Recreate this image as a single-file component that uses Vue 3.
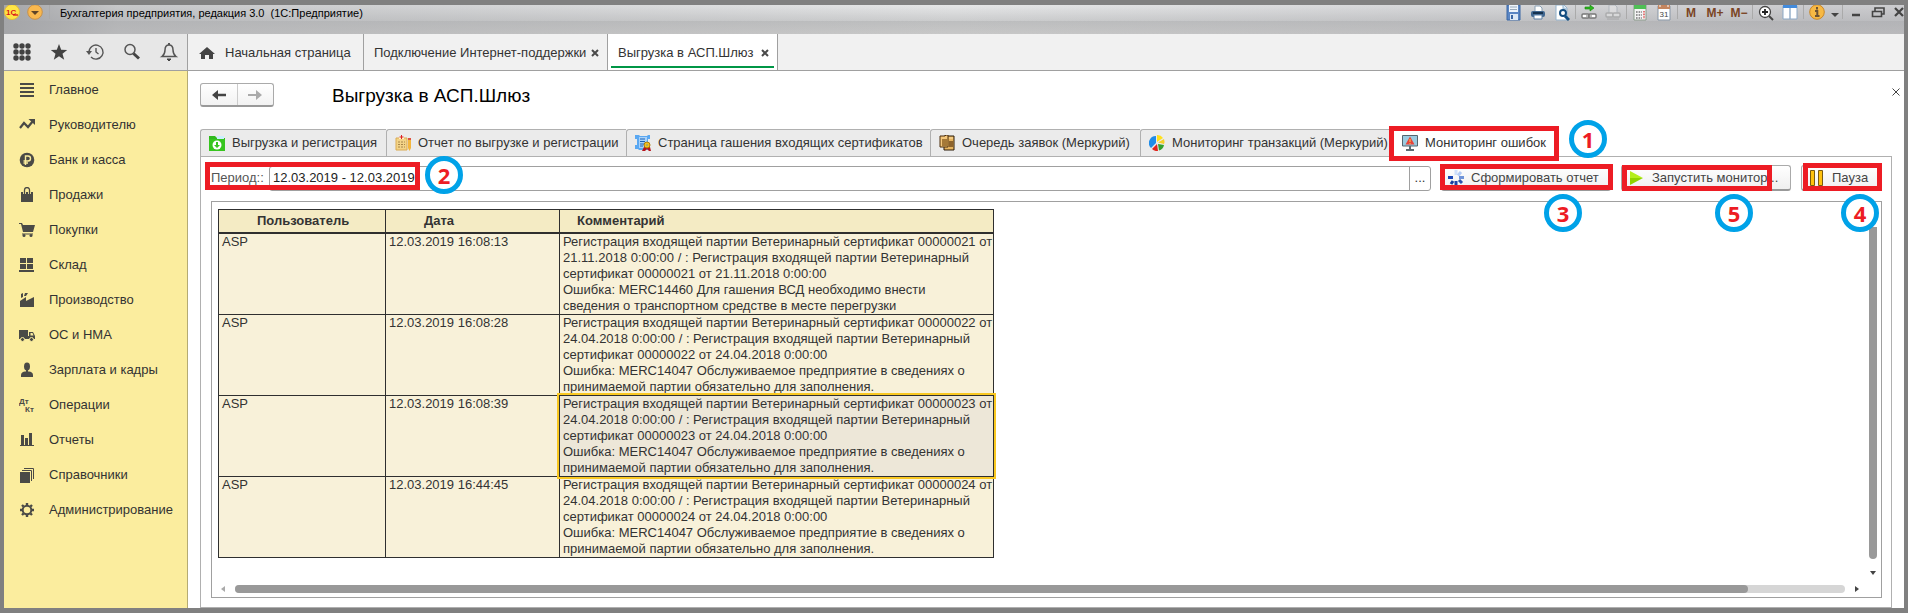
<script setup>
import { ref } from 'vue'

const period = ref('12.03.2019 - 12.03.2019')

const titleIcons = [
  { label: 'Сохранить', svg: '<path d="M1 0h13v15H1z" fill="#5b86c4" stroke="#3b66a4"/><path d="M3 0h9v7H3z" fill="#eef4fb"/><path d="M4 2h7M4 4.500h7" stroke="#9ab"/><path d="M4 9h8v6H4z" fill="#dce8f6"/><path d="M5 10h2v4H5z" fill="#3b66a4"/>' },
  { label: 'Печать', svg: '<path d="M5 6V1h5l2 2v3" fill="#fff" stroke="#8aa0b4"/><rect x="1" y="6" width="14" height="6" rx="2" fill="#3f6690"/><path d="M3 8h10" stroke="#16324f" stroke-width="2"/><path d="M4 10h8v4H4z" fill="#fff" stroke="#5c7ea3"/>' },
  { label: 'Просмотр', svg: '<path d="M2 0h8l3 3v12H2z" fill="#fff" stroke="#93b2cc"/><path d="M9 0v4h4" fill="#cfe0ef" stroke="#93b2cc"/><circle cx="9" cy="8" r="3" fill="#fff" stroke="#134d80" stroke-width="2"/><path d="M11 11l4 4" stroke="#134d80" stroke-width="3"/>' },
  { sep: true },
  { label: 'Ссылка', svg: '<path d="M4 2h5V0l4 3-4 3V4H4z" fill="#2dbb1e" stroke="#15820c" stroke-width=".6"/><rect x="1" y="9" width="7" height="4" rx="1" fill="#fff" stroke="#777" stroke-width="1.4"/><rect x="8" y="9" width="7" height="4" rx="1" fill="#fff" stroke="#777" stroke-width="1.4"/><path d="M5 11h6" stroke="#777"/>' },
  { label: 'Перейти по ссылке', svg: '<g opacity=".45"><path d="M4 9V0h6l2 2v7" fill="#eee" stroke="#8d9aa6"/><rect x="1" y="8" width="7" height="4" rx="1" fill="#eee" stroke="#888" stroke-width="1.4"/><rect x="8" y="8" width="7" height="4" rx="1" fill="#eee" stroke="#888" stroke-width="1.4"/><path d="M2 14h12" stroke="#888"/></g>' },
  { sep: true },
  { label: 'Калькулятор', svg: '<path d="M2 0h12v15H2z" fill="#f5f5f5" stroke="#8a9a8a"/><path d="M2 0h12v4H2z" fill="#4fbf55"/><path d="M4 7h6M4 10h6M4 13h6" stroke="#777" stroke-width="1.6" stroke-dasharray="1.6 1"/><path d="M12 6v8" stroke="#e05a5a" stroke-width="1.6" stroke-dasharray="1.6 1"/>' },
  { label: 'Календарь', svg: '<path d="M2 1h12v14H2z" fill="#fff" stroke="#8795a5"/><path d="M2 0h12v4H2z" fill="#c4855e"/><path d="M4 0v2M12 0v2" stroke="#fff"/><text x="8" y="12" text-anchor="middle" font-size="8" fill="#444">31</text>' },
  { sep: true },
  { label: 'M', text: 'M' },
  { label: 'M+', text: 'M+' },
  { label: 'M-', text: 'M−' },
  { sep: true },
  { label: 'Масштаб', svg: '<circle cx="7" cy="7" r="5.5" fill="#fff" stroke="#444" stroke-width="1.3"/><path d="M4 7h6M7 4v6" stroke="#222" stroke-width="1.8"/><path d="M11 11l4 4" stroke="#444" stroke-width="2"/>' },
  { label: 'Панели', svg: '<path d="M1 1h14v13H1z" fill="#fff" stroke="#8da9c6"/><path d="M1 0h14v3H1z" fill="#438bdc"/><path d="M8 3v11" stroke="#8da9c6" stroke-width="1.4"/>' },
  { sep: true },
  { label: 'О программе', svg: '<circle cx="8" cy="7" r="7.3" fill="#f7b944" stroke="#c8872a"/><path d="M8 2v2.500M6 6h2.300v5M6 11h4.500" stroke="#6d5334" stroke-width="2" fill="none"/>' },
  { label: 'Ещё', kind: 'caret', svg: '<path d="M4 8h8l-4 4z" fill="#444"/>' },
  { sep: true },
  { label: 'Свернуть', svg: '<path d="M4 10h8" stroke="#444" stroke-width="2.500"/>' },
  { label: 'Восстановить', kind: 'restore', svg: '<path d="M5 6V3h9v6h-2" fill="none" stroke="#444" stroke-width="1.600"/><path d="M2.500 6.500h9v5h-9z" fill="none" stroke="#444" stroke-width="1.600"/>' },
  { label: 'Закрыть', kind: 'close', svg: '<path d="M7 3l8 8M15 3l-8 8" stroke="#444" stroke-width="2.200"/>' },
]

const quickTools = [
  { label: 'Меню', svg: '<g fill="#424242"><circle cx="4" cy="3" r="2.700"/><circle cx="10" cy="3" r="2.700"/><circle cx="16" cy="3" r="2.700"/><circle cx="4" cy="9" r="2.700"/><circle cx="10" cy="9" r="2.700"/><circle cx="16" cy="9" r="2.700"/><circle cx="4" cy="15" r="2.700"/><circle cx="10" cy="15" r="2.700"/><circle cx="16" cy="15" r="2.700"/></g>' },
  { label: 'Избранное', svg: '<path d="M10 1l2.200 5.700 6 .2-4.700 3.800 1.700 6-5.200-3.500L4.800 16.700l1.700-6L1.800 6.900l6-.2z" fill="#424242"/>' },
  { label: 'История', svg: '<path d="M4 9a7 7 0 1 1 2 5" fill="none" stroke="#555" stroke-width="1.400"/><path d="M1 8h6l-3 4z" fill="#555"/><path d="M11 5v4l2.500 2" fill="none" stroke="#555" stroke-width="1.400"/>' },
  { label: 'Поиск', svg: '<circle cx="8" cy="6.500" r="5" fill="none" stroke="#555" stroke-width="1.500"/><path d="M11.500 10.500l5.500 5" stroke="#444" stroke-width="3"/>' },
  { label: 'Уведомления', svg: '<path d="M3 13.500c2-1.500 3-3 3-6.500 0-3 1.500-5 4-5s4 2 4 5c0 3.500 1 5 3 6.500z" fill="none" stroke="#555" stroke-width="1.500"/><path d="M8 16h4l-2 2z" fill="#444" stroke="#444"/><path d="M10 0v2" stroke="#555" stroke-width="2"/>' },
]

const sections = [
  { name: 'Главное', svg: '<path d="M1 2h14M1 6h14M1 10h14M1 14h14" stroke-width="2" stroke="#4a4a46"/>' },
  { name: 'Руководителю', svg: '<path d="M1 11l4-5 4 4 5-6" fill="none" stroke="#4a4a46" stroke-width="2.200"/><path d="M9.500 2H16v6z"/>' },
  { name: 'Банк и касса', svg: '<circle cx="8" cy="8" r="7.300"/><path d="M6.500 13V4h2.500a2.300 2.300 0 0 1 0 5H4.500M4.500 11H9" fill="none" stroke="#fbed9e" stroke-width="1.400"/>' },
  { name: 'Продажи', svg: '<path d="M2 5h12v10H2z"/><path d="M5.500 7V3a2.500 2.500 0 0 1 5 0v4" fill="none" stroke="#fbed9e" stroke-width="3"/><path d="M5.500 7V3a2.500 2.500 0 0 1 5 0v4" fill="none" stroke="#4a4a46" stroke-width="1.300"/>' },
  { name: 'Покупки', svg: '<path d="M0 1h3l1 2h12l-2 7H4L2 2H0z"/><path d="M3 12h11" stroke="#4a4a46"/><circle cx="5" cy="13.500" r="1.500"/><circle cx="12" cy="13.500" r="1.500"/>' },
  { name: 'Склад', svg: '<path d="M1 1h6v5H1zM8 1h6v5H8zM1 7h6v5H1zM8 7h6v5H8zM0 13h15v2H0z"/>' },
  { name: 'Производство', svg: '<path d="M1 15V9l6-4v4l8-4v10zM2 2l2-1v4L2 6zM6 1h3L7 4H5z"/>' },
  { name: 'ОС и НМА', svg: '<path d="M0 3h9v9H0zM10 5h4l2 4v3h-6z"/><path d="M9 9h2v3H9z"/><path d="M11.500 6h2l1 2.500h-3z" fill="#fbed9e"/><circle cx="3.500" cy="12.500" r="2" stroke="#fbed9e"/><circle cx="12.500" cy="12.500" r="2" stroke="#fbed9e"/>' },
  { name: 'Зарплата и кадры', svg: '<ellipse cx="8" cy="4.500" rx="3" ry="4"/><path d="M7 7h2v4H7z"/><path d="M2 15v-2c0-2 2-3.500 4-3.500h4c2 0 4 1.500 4 3.500v2z"/>' },
  { name: 'Операции', svg: '<g font-size="8" font-weight="700"><text x="0" y="7">Дт</text><text x="6" y="15">Кт</text></g>' },
  { name: 'Отчеты', svg: '<path d="M2 3h3v10H2zM6 6h3v7H6zM10 1h3v12h-3zM1 13h14v1H1z"/>' },
  { name: 'Справочники', svg: '<path d="M1 5h10v11H1z"/><path d="M3 3.500h9.500V14M5 1.500h9.500V12" fill="none" stroke="#4a4a46"/>' },
  { name: 'Администрирование', svg: '<circle cx="8" cy="8" r="4.300" fill="none" stroke="#4a4a46" stroke-width="2"/><g stroke="#4a4a46" stroke-width="2.400"><path d="M8 1v2M8 13v2M1 8h2M13 8h2M3 3l1.500 1.500M11.500 11.500L13 13M3 13l1.500-1.500M11.500 4.500L13 3"/></g>' },
]

const pages = [
  { key: 'tab-upload', name: 'Выгрузка и регистрация', svg: '<path d="M0 1h6l2 2h8v13H0z" fill="#2fb91d"/><path d="M8 1h7v3H8z" fill="#ccefff"/><path d="M0 4h16v12H0z" fill="#37c51f"/><circle cx="8" cy="10" r="4.500" fill="#fff"/><path d="M7 7h2v3h2l-3 3-3-3h2z" fill="#37c51f"/>' },
  { key: 'tab-report', name: 'Отчет по выгрузке и регистрации', svg: '<path d="M1 3h11v12H1z" fill="#f3d488" stroke="#dbab53"/><path d="M4 2h5v2H4z" fill="#fff3c9"/><path d="M6.500 0v4M4.500 2h4" stroke="#d22"/><path d="M3 7h7M3 9.500h7M3 12h7" stroke="#a8864a" stroke-dasharray="2 1"/><path d="M13 3h3v10l-1.500 3L13 13z" fill="#f4b63c"/><path d="M13 3h3v2h-3z" fill="#e0523e"/>' },
  { key: 'tab-cert', name: 'Страница гашения входящих сертификатов', svg: '<path d="M0 0h4l1 1h7l1-1h2v4h-2v11H4l-1-1H0v-4h2V4H0z" fill="#5aa8f2"/><path d="M4 2h8v11H4z" fill="#a8d2fb"/><path d="M5 4h5M5 6.500h5M5 9h4M5 11h3" stroke="#1c63b5"/><path d="M9 12l-2 4h3l2-2 2 2h2l-1-4z" fill="#b7131c"/><circle cx="12" cy="10" r="3" fill="#f5bf1e" stroke="#a97c0c"/><circle cx="12" cy="10" r="1" fill="#9a7"/>' },
  { key: 'tab-queue', name: 'Очередь заявок (Меркурий)', svg: '<path d="M5 1h10v14H5z" fill="#e7b45f" stroke="#2b1b08"/><path d="M1 1h5l1-1h2v12H1z" fill="#f4c77b" stroke="#4a2c0d"/><path d="M3 4h6v7H3z" fill="#a57938"/><path d="M10 6h4v6h-4z" fill="#8d632c"/><path d="M10 3h4" stroke="#ffe1a6"/>' },
  { key: 'tab-trans', name: 'Мониторинг транзакций (Меркурий)', svg: '<path d="M7 8V1a7 7 0 0 0-5 12z" fill="#1f8ce8"/><path d="M8 7V0a7 7 0 0 1 6 3z" fill="#ffe11c"/><path d="M9 7.500L15 4a7 7 0 0 1 0 5z" fill="#f6cf28"/><path d="M8 9L3 14a7 7 0 0 0 6 2z" fill="#e0231c"/><path d="M9 9l6 1a7 7 0 0 1-5 5.500z" fill="#35a12e"/>' },
  { key: 'tab-errors', name: 'Мониторинг ошибок', active: true, svg: '<path d="M.5 .5h15v10.500H.5z" fill="#9bcbe0" stroke="#54656f"/><path d="M8 1.500l4.500 8h-9z" fill="#e8433a"/><path d="M8 4v3M8 8v1" stroke="#fbd34c"/><path d="M7 11h2v3H7zM4 14h8v2H4z" fill="#5c6b73"/>' },
]

const rows = [
  { user: 'ASP', date: '12.03.2019 16:08:13', text: 'Регистрация входящей партии Ветеринарный сертификат 00000021 от\n21.11.2018 0:00:00 / : Регистрация входящей партии Ветеринарный\nсертификат 00000021 от 21.11.2018 0:00:00\nОшибка: MERC14460 Для гашения ВСД необходимо внести\nсведения о транспортном средстве в месте перегрузки' },
  ...[['22', '16:08:28'], ['23', '16:08:39'], ['24', '16:44:45']].map(([n, time]) => ({
    user: 'ASP',
    date: `12.03.2019 ${time}`,
    selected: n === '23',
    text: `Регистрация входящей партии Ветеринарный сертификат 000000${n} от\n24.04.2018 0:00:00 / : Регистрация входящей партии Ветеринарный\nсертификат 000000${n} от 24.04.2018 0:00:00\nОшибка: MERC14047 Обслуживаемое предприятие в сведениях о\nпринимаемой партии обязательно для заполнения.`,
  })),
]
</script>

<template>
  <div class="window">
    <header class="titlebar">
      <svg class="logo" viewBox="0 0 16 16"><circle cx="8" cy="7" r="7.500" fill="#ffe545" stroke="#e4bd3a" /><text x="2" y="10" font-size="8" font-weight="700" fill="#d8141b">1С</text><path d="M9 10h5" stroke="#d8141b" stroke-width="1.300" /></svg>
      <button class="main-menu" aria-label="Главное меню"><svg viewBox="0 0 16 16"><circle cx="8" cy="7" r="7.300" fill="#f9b84e" stroke="#c7914a" /><path d="M4 6h8l-4 4z" fill="#5f4527" /></svg></button>
      <span class="sep"></span>
      <span class="app-name">Бухгалтерия предприятия, редакция 3.0&nbsp; (1С:Предприятие)</span>
      <div class="title-tools">
        <template v-for="(t, i) in titleIcons" :key="i">
          <span v-if="t.sep" class="sep"></span>
          <button v-else :class="['tool', t.kind]" :aria-label="t.label">
            <b v-if="t.text">{{ t.text }}</b>
            <svg v-else viewBox="0 0 16 16" v-html="t.svg"></svg>
          </button>
        </template>
      </div>
    </header>

    <div class="topbar">
      <div class="quick">
        <button v-for="q in quickTools" :key="q.label" :aria-label="q.label"><svg viewBox="0 0 20 18" v-html="q.svg"></svg></button>
      </div>
      <nav class="open-tabs">
        <a href="#" class="open-tab home"><svg viewBox="0 0 16 14"><path d="M8 1l8 7h-2v5h-4V9H6v4H2V8H0z" fill="#444" /></svg>Начальная страница</a>
        <div class="open-tab support"><a href="#">Подключение Интернет-поддержки</a><button aria-label="Закрыть вкладку"><svg viewBox="0 0 8 8"><path d="M1 1l6 6M7 1L1 7" /></svg></button></div>
        <div class="open-tab gateway current"><a href="#">Выгрузка в АСП.Шлюз</a><button aria-label="Закрыть вкладку"><svg viewBox="0 0 8 8"><path d="M1 1l6 6M7 1L1 7" /></svg></button></div>
      </nav>
    </div>

    <div class="body">
      <nav class="sections">
        <a v-for="s in sections" :key="s.name" href="#"><svg viewBox="0 0 16 16" v-html="s.svg"></svg>{{ s.name }}</a>
      </nav>

      <main class="form">
        <div class="form-head">
          <div class="history">
            <button aria-label="Назад"><svg viewBox="0 0 14 12"><path d="M0 6l6-5v3.700h8v2.600H6V11z" fill="#444" /></svg></button>
            <button aria-label="Вперед"><svg viewBox="0 0 14 12"><path d="M14 6L8 1v4H0v2h8v4z" fill="#aaa" /></svg></button>
          </div>
          <h1>Выгрузка в АСП.Шлюз</h1>
          <button class="close-form" aria-label="Закрыть"><svg viewBox="0 0 8 8"><path d="M.5 .5l7 7M7.500 .5l-7 7" stroke="#444" /></svg></button>
        </div>

        <div class="pages">
          <button v-for="p in pages" :key="p.key" :class="['page-tab', p.key, { active: p.active }]">
            <svg viewBox="0 0 16 16" v-html="p.svg"></svg>{{ p.name }}
            <template v-if="p.active"><span class="frame"></span><span class="mark">1</span></template>
          </button>
        </div>

        <section class="panel">
          <div class="commands">
            <div class="period">
              <label for="period">Период::</label>
              <div class="field"><input id="period" v-model="period" type="text" /><button aria-label="Выбрать период">...</button></div>
              <span class="frame"></span><span class="mark">2</span>
            </div>
            <button class="cmd build">
              <svg viewBox="0 0 16 16"><g stroke-width="3"><path d="M8 0v5" stroke="#cfe0fb" /><path d="M13 2l-3 3.500" stroke="#b5cdf6" /><path d="M16 7.500h-5" stroke="#6f94d8" /><path d="M14 13l-3-3" stroke="#2c53ae" /><path d="M8 15v-4" stroke="#1f45a8" /><path d="M3 14l2-3" stroke="#173f9f" /><path d="M0 7.500h5" stroke="#1a47b8" /></g></svg>Сформировать отчет
              <span class="frame"></span><span class="mark">3</span>
            </button>
            <button class="cmd start">
              <svg viewBox="0 0 16 16"><path d="M1 1l13 7H1z" fill="#b4ee1c" /><path d="M1 8h13L1 15z" fill="#8fd400" /></svg>Запустить монитор...
              <span class="frame"></span><span class="mark">5</span>
            </button>
            <button class="cmd pause">
              <svg viewBox="0 0 16 16"><path d="M1.500 .5h4v15h-4zM9.500 .5h4v15h-4z" fill="#ffc20e" stroke="#7a5a10" /></svg>Пауза
              <span class="frame"></span><span class="mark">4</span>
            </button>
          </div>

          <div class="report">
            <div class="sheet">
              <table>
                <thead><tr><th class="user">Пользователь</th><th class="date">Дата</th><th class="comment">Комментарий</th></tr></thead>
                <tbody>
                  <tr v-for="r in rows" :key="r.date">
                    <td><div>{{ r.user }}</div></td>
                    <td><div>{{ r.date }}</div></td>
                    <td :class="{ selected: r.selected }"><div>{{ r.text }}</div></td>
                  </tr>
                </tbody>
              </table>
            </div>
            <div class="vscroll"><span class="thumb"></span><svg viewBox="0 0 6 4"><path d="M0 0h6L3 4z" fill="#444" /></svg></div>
            <div class="hscroll">
              <svg viewBox="0 0 4 6"><path d="M4 0v6L0 3z" fill="#aaa" /></svg>
              <span class="track"><span class="thumb"></span></span>
              <svg viewBox="0 0 4 6"><path d="M0 0v6l4-3z" fill="#444" /></svg>
            </div>
          </div>
        </section>
      </main>
    </div>
  </div>
</template>

<style>
body { margin: 0; }
</style>

<style scoped>
* { box-sizing: border-box; }
.window { min-height: 100vh; display: flex; flex-direction: column; border: solid #808080; border-width: 5px 4px; background: #fff; font: 13px/16px "Liberation Sans", Arial, sans-serif; color: #333; }
button { font: inherit; color: inherit; background: none; border: 0; padding: 0; margin: 0; }
a { color: inherit; text-decoration: none; }
svg { display: block; flex: none; }

.titlebar { display: flex; align-items: flex-start; height: 29px; background: linear-gradient(90deg, #a4a5a8 0, #a9aaad80 6%, #fff0 50%, #a4a4aa66 95%), linear-gradient(#e6e7e8 0, #cbcccd 16px, #bdbebf 16px, #c8c8c8 29px); }
.titlebar svg { width: 16px; height: 16px; }
.main-menu { margin-left: 7px; }
.sep { width: 1px; height: 14px; margin: 0 1px; background: #aaa; }
.main-menu + .sep { margin: 0 0 0 6px; }
.app-name { margin-left: 10px; font-size: 11px; line-height: 16px; color: #000; white-space: nowrap; }
.title-tools { display: flex; margin-left: auto; }
.tool { width: 24px; height: 16px; display: flex; justify-content: center; }
.tool b { color: #7a4424; font-size: 12px; line-height: 16px; }
.tool.caret { width: 12px; }
.tool.restore { width: 20px; }
.tool.close { width: 16px; }

.topbar { display: flex; height: 37px; border-bottom: 1px solid #a0a0a0; background: #f1f1f1; }
.quick { display: flex; width: 184px; background: #e7e7e7; border-right: 1px solid #a0a0a0; }
.quick button { flex: 1; display: flex; align-items: center; justify-content: center; }
.quick svg { width: 20px; height: 18px; }
.open-tabs { display: flex; }
.open-tab { display: flex; align-items: center; padding-top: 1px; border-right: 1px solid #a0a0a0; position: relative; white-space: nowrap; }
.open-tab.home { width: 176px; padding-left: 11px; gap: 10px; }
.home svg { width: 16px; height: 14px; }
.open-tab.support { width: 244px; }
.open-tab.gateway { width: 170px; }
.open-tab.support, .open-tab.gateway { justify-content: space-between; padding: 1px 8px 0 10px; }
.open-tab button svg { width: 8px; height: 8px; stroke: #4a4a4a; stroke-width: 2; }
.open-tab.current { background: #fff; }
.current::after { content: ""; position: absolute; left: 3px; right: 3px; bottom: 2px; height: 2px; background: #009646; }

.body { flex: 1; display: flex; }
.sections { width: 184px; flex: none; padding: 1px 0 16px; background: #fbed9e; border-right: 1px solid #b5ab73; }
.sections a { display: flex; align-items: center; gap: 14px; height: 35px; padding-left: 15px; }
.sections svg { width: 16px; height: 16px; fill: #4a4a46; }

.form { flex: 1; min-width: 0; display: flex; flex-direction: column; padding: 12px 12px 0; }
.form-head { display: flex; align-items: center; height: 24px; margin: 0 -8px 22px 0; }
.history { display: flex; width: 74px; height: 24px; border: 1px solid #aaa; border-bottom: 2px solid #999; border-radius: 3px; background: linear-gradient(#fff, #f2f2f2); }
.history button { flex: 1; display: flex; align-items: center; justify-content: center; }
.history button + button { border-left: 1px solid #ccc; }
.history svg { width: 14px; height: 12px; }
h1 { margin: 0 0 0 58px; padding-top: 2px; font-size: 19px; line-height: 24px; font-weight: 400; color: #000; }
.close-form { margin: 0 0 6px auto; }
.close-form svg { width: 8px; height: 8px; }

.pages { display: flex; height: 28px; border-bottom: 1px solid #b0b0b0; }
.page-tab { display: flex; align-items: center; gap: 7px; height: 28px; padding: 0 0 0 8px; border: 1px solid #b0b0b0; border-right: 0; border-radius: 3px 0 0 0; background: #ebebeb; white-space: nowrap; position: relative; }
.page-tab svg { width: 16px; height: 16px; }
.tab-upload { width: 186px; }
.tab-report { width: 240px; }
.tab-cert { width: 304px; }
.tab-queue { width: 210px; }
.tab-trans { width: 251px; }
.tab-errors { width: 166px; padding-left: 10px; }
.page-tab.active { background: #fff; border-bottom-color: #fff; }

.frame { position: absolute; border: 5px solid #ed1c24; pointer-events: none; }
.mark { position: absolute; z-index: 2; display: flex; align-items: center; justify-content: center; width: 38px; height: 38px; border: 5px solid #00a2e8; border-radius: 50%; background: #fff; color: #ed1c24; font: 700 22px/28px "Open Sans", "Noto Sans", sans-serif; pointer-events: none; }
.tab-errors .frame { left: -3px; right: -2px; top: -4px; bottom: -5px; }
.tab-errors .mark { left: 177px; top: -10px; }

.panel { flex: 1; display: flex; flex-direction: column; gap: 10px; padding: 8px 9px 9px 10px; border: 1px solid #b0b0b0; border-top: 0; }
.commands { display: flex; gap: 10px; height: 26px; }
.period { flex: 1; display: flex; align-items: center; position: relative; }
.period label { width: 58px; color: #555; }
.field { flex: 1; display: flex; height: 25px; border: 1px solid #a0a0a0; border-radius: 3px; }
.field input { flex: 1; min-width: 0; border: 0; outline: 0; padding: 0 3px; background: none; font: inherit; color: #222; }
.field button { width: 21px; border-left: 1px solid #a0a0a0; }
.period .frame { left: -6px; top: -3px; width: 215px; height: 28px; }
.period .mark { left: 214px; top: -9px; }
.cmd { display: flex; align-items: center; width: 170px; height: 26px; padding-left: 6px; border: 1px solid #aaa; border-bottom: 2px solid #999; border-radius: 3px; background: linear-gradient(#fff, #f0f0f0); color: #444; white-space: nowrap; position: relative; gap: 7px; }
.cmd svg { width: 16px; height: 16px; }
.cmd.start { padding-left: 7px; }
.cmd.pause { width: 81px; padding-left: 7px; }
.build .frame { left: -2px; right: -3px; top: -2px; bottom: -1px; }
.start .frame { left: 0; right: 18px; top: -1px; bottom: -2px; }
.pause .frame { left: 1px; right: -1px; top: -3px; bottom: -2px; }
.build .mark { left: 102px; top: 28px; }
.start .mark { left: 93px; top: 28px; }
.pause .mark { left: 39px; top: 28px; }

.report { flex: 1; display: grid; grid-template-columns: 1fr 12px; grid-template-rows: 1fr 12px; border: 1px solid #a0a0a0; }
.sheet { padding: 7px 0 16px 6px; }
table { border-collapse: collapse; table-layout: fixed; width: 776px; background: #f8f1d9; }
th { height: 23px; padding: 0; border: 1px solid #2f2f2f; border-bottom-width: 2px; background: #f4ebc4; text-align: left; line-height: 20px; }
th.user { width: 167px; padding-left: 38px; }
th.date { width: 174px; padding-left: 38px; }
th.comment { padding-left: 17px; }
td { padding: 0; border: 1px solid #2f2f2f; vertical-align: top; position: relative; }
td div { height: 80px; padding-left: 3px; white-space: pre; }
td.selected { background: #ede7d8; }
td.selected::after { content: ""; position: absolute; inset: -3px; border: 2px solid #f9c822; z-index: 1; }
.vscroll { display: flex; flex-direction: column; align-items: center; gap: 12px; padding: 25px 4px 10px 0; }
.vscroll .thumb { flex: 1; width: 8px; border-radius: 0 0 4px 4px; background: #999; }
.vscroll svg { width: 6px; height: 4px; }
.hscroll { grid-column: 1 / 3; display: flex; align-items: center; gap: 10px; padding: 0 22px 4px 9px; }
.hscroll svg { width: 4px; height: 6px; }
.track { flex: 1; height: 8px; border-radius: 4px; background: #d6d6d6; }
.hscroll .thumb { display: block; width: 94%; height: 8px; border-radius: 4px; background: #999; }
</style>
